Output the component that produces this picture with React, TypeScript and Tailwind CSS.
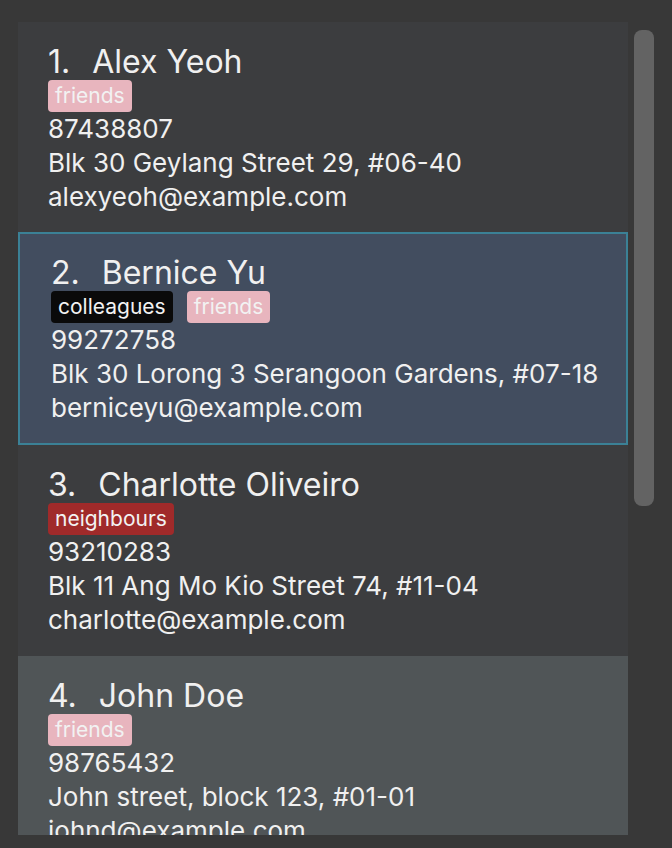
import React from "react";

type Tag = { label: string; tone: "friends" | "colleagues" | "neighbours" };

interface Person {
  name: string;
  tags: Tag[];
  phone: string;
  address: string;
  email: string;
}

const people: Person[] = [
  {
    name: "Alex Yeoh",
    tags: [{ label: "friends", tone: "friends" }],
    phone: "87438807",
    address: "Blk 30 Geylang Street 29, #06-40",
    email: "alexyeoh@example.com",
  },
  {
    name: "Bernice Yu",
    tags: [
      { label: "colleagues", tone: "colleagues" },
      { label: "friends", tone: "friends" },
    ],
    phone: "99272758",
    address: "Blk 30 Lorong 3 Serangoon Gardens, #07-18",
    email: "berniceyu@example.com",
  },
  {
    name: "Charlotte Oliveiro",
    tags: [{ label: "neighbours", tone: "neighbours" }],
    phone: "93210283",
    address: "Blk 11 Ang Mo Kio Street 74, #11-04",
    email: "charlotte@example.com",
  },
  {
    name: "John Doe",
    tags: [{ label: "friends", tone: "friends" }],
    phone: "98765432",
    address: "John street, block 123, #01-01",
    email: "johnd@example.com",
  },
];

const tagTone = {
  friends: "bg-[#e8b5be]",
  colleagues: "bg-[#0a0a0a]",
  neighbours: "bg-[#a02a2a]",
};

// card heights as measured, the selected one carries its 2px border
const cardHeight = ["h-[210px]", "h-[213px]", "h-[211px]", "h-[211px]"];

function PersonCard({
  index,
  person,
  selected,
  alt,
}: {
  index: number;
  person: Person;
  selected: boolean;
  alt: boolean;
}) {
  const bg = selected
    ? "bg-[#424d5f] border-2 border-[#3b8196] pl-[31px] pt-[19px]"
    : alt
      ? "bg-[#505557] pl-[30px] pt-[20px]"
      : "bg-[#3c3d3f] pl-[30px] pt-[20px]";

  return (
    <div className={`shrink-0 ${cardHeight[index - 1]} ${bg}`}>
      <div className="flex text-[32px] leading-[40px] text-[#f0f0f0]">
        <span className="whitespace-pre">{index}.  </span>
        <span className="ml-[4px]">{person.name}</span>
      </div>
      <div className="mt-[-2px] flex gap-[14px]">
        {person.tags.map((t) => (
          <span
            key={t.label}
            className={`h-[32px] rounded-[4px] px-[7px] text-[21px] leading-[32px] text-[#f2f2f2] ${tagTone[t.tone]}`}
          >
            {t.label}
          </span>
        ))}
      </div>
      <div className="text-[26px] leading-[34px] text-[#f0f0f0]">
        <div>{person.phone}</div>
        <div>{person.address}</div>
        <div>{person.email}</div>
      </div>
    </div>
  );
}

export default function App() {
  return (
    <div
      className="flex h-[848px] w-[672px] bg-[#383838] pl-[18px] pt-[22px]"
      style={{ fontFamily: "Inter, 'Noto Sans', sans-serif" }}
    >
      <div className="flex h-[813px] w-[610px] flex-col overflow-hidden bg-[#3c3d3f]">
        {people.map((p, i) => (
          <PersonCard
            key={p.name}
            index={i + 1}
            person={p}
            selected={i === 1}
            alt={i === 3}
          />
        ))}
      </div>
      <div className="ml-[6px] w-[20px] pt-[8px]">
        <div className="h-[476px] w-[20px] rounded-[8px] bg-[#636363]" />
      </div>
    </div>
  );
}
